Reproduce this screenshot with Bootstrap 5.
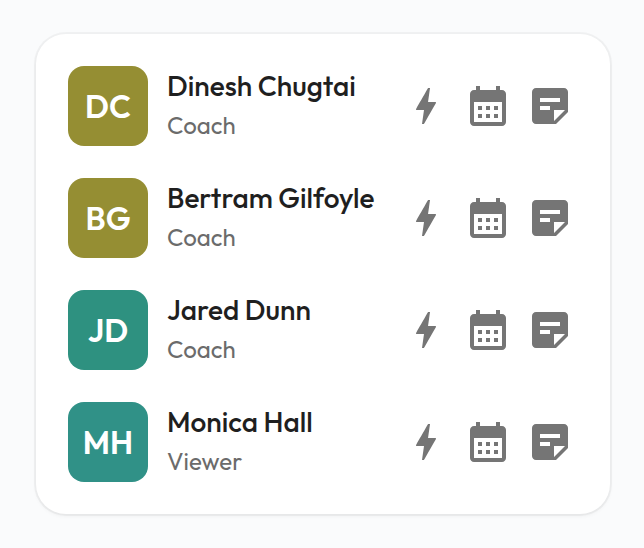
<!DOCTYPE html>
<html lang="en">
<head>
<meta charset="utf-8">
<meta name="viewport" content="width=device-width, initial-scale=1">
<title>Team members</title>
<link href="https://cdn.jsdelivr.net/npm/bootstrap@5.3.0/dist/css/bootstrap.min.css" rel="stylesheet">
<style>
body { background: #fafbfc; font-family: Outfit, Lato, sans-serif; }
.page-wrap { padding: 34px 34px 34px 36px; }
.team-card { border-radius: 30px; padding: 32px; box-shadow: 0 2px 4px rgba(0,0,0,.05), 0 0 0 2px rgba(0,0,0,.04); }
.member-list { gap: 32px; }
.avatar { width: 80px; height: 80px; border-radius: 16px; font-size: 32px; line-height: 40px; font-weight: 600; }
.avatar-olive { background: #958e33; }
.avatar-teal { background: #2e9180; }
.avatar-sea { background: #309187; }
.member-text { padding-left: 19px; }
.member-name { font-size: 28px; line-height: 40px; font-weight: 500; color: #1f1f1f; }
.member-role { font-size: 24px; line-height: 38px; color: #6b6b6b; }
.actions { gap: 14px; margin-right: 4px; }
.action { width: 48px; height: 48px; color: #757575; }
.action svg { width: 48px; height: 48px; fill: currentColor; }
</style>
</head>
<body>
<svg class="d-none" aria-hidden="true">
  <symbol id="bolt" viewBox="0 0 24 24"><path d="M11 21h-1l1-7H7.5c-.88 0-.33-.75-.31-.78C8.48 10.94 10.42 7.54 13.01 3h1l-1 7h3.51c.4 0 .62.19.4.66C12.97 17.55 11 21 11 21z"/></symbol>
  <symbol id="calendar" viewBox="0 0 24 24"><path fill-rule="evenodd" d="M19 4h-1V2h-2v2H8V2H6v2H5c-1.1 0-2 .9-2 2v14c0 1.100.9 2 2 2h14c1.100 0 2-.9 2-2V6c0-1.100-.9-2-2-2zM5 10h14v10H5zM7 12h2v2H7zM11 12h2v2h-2zM15 12h2v2h-2zM7 16h2v2H7zM11 16h2v2h-2zM15 16h2v2h-2z"/></symbol>
  <symbol id="note" viewBox="0 0 24 24"><path fill-rule="evenodd" d="M19 3H5c-1.100 0-2 .9-2 2v14c0 1.100.9 2 2 2h10l6-6V5c0-1.100-.9-2-2-2zM7 8h10v2H7zM7 12h5v2H7zM14 19.500V14h5.500z"/></symbol>
</svg>
<main class="page-wrap">
  <section class="team-card bg-white" aria-label="Team members">
    <ul class="member-list list-unstyled d-flex flex-column mb-0">
      <li class="d-flex">
        <div class="avatar avatar-olive d-flex align-items-center justify-content-center flex-shrink-0 text-white">DC</div>
        <div class="member-text flex-grow-1 text-nowrap"><div class="member-name">Dinesh Chugtai</div><div class="member-role">Coach</div></div>
        <div class="actions d-flex flex-shrink-0 align-self-center">
          <button type="button" class="action btn border-0 p-0" aria-label="Activity"><svg class="d-block"><use href="#bolt"/></svg></button>
          <button type="button" class="action btn border-0 p-0" aria-label="Calendar"><svg class="d-block"><use href="#calendar"/></svg></button>
          <button type="button" class="action btn border-0 p-0" aria-label="Notes"><svg class="d-block"><use href="#note"/></svg></button>
        </div>
      </li>
      <li class="d-flex">
        <div class="avatar avatar-olive d-flex align-items-center justify-content-center flex-shrink-0 text-white">BG</div>
        <div class="member-text flex-grow-1 text-nowrap"><div class="member-name">Bertram Gilfoyle</div><div class="member-role">Coach</div></div>
        <div class="actions d-flex flex-shrink-0 align-self-center">
          <button type="button" class="action btn border-0 p-0" aria-label="Activity"><svg class="d-block"><use href="#bolt"/></svg></button>
          <button type="button" class="action btn border-0 p-0" aria-label="Calendar"><svg class="d-block"><use href="#calendar"/></svg></button>
          <button type="button" class="action btn border-0 p-0" aria-label="Notes"><svg class="d-block"><use href="#note"/></svg></button>
        </div>
      </li>
      <li class="d-flex">
        <div class="avatar avatar-teal d-flex align-items-center justify-content-center flex-shrink-0 text-white">JD</div>
        <div class="member-text flex-grow-1 text-nowrap"><div class="member-name">Jared Dunn</div><div class="member-role">Coach</div></div>
        <div class="actions d-flex flex-shrink-0 align-self-center">
          <button type="button" class="action btn border-0 p-0" aria-label="Activity"><svg class="d-block"><use href="#bolt"/></svg></button>
          <button type="button" class="action btn border-0 p-0" aria-label="Calendar"><svg class="d-block"><use href="#calendar"/></svg></button>
          <button type="button" class="action btn border-0 p-0" aria-label="Notes"><svg class="d-block"><use href="#note"/></svg></button>
        </div>
      </li>
      <li class="d-flex">
        <div class="avatar avatar-sea d-flex align-items-center justify-content-center flex-shrink-0 text-white">MH</div>
        <div class="member-text flex-grow-1 text-nowrap"><div class="member-name">Monica Hall</div><div class="member-role">Viewer</div></div>
        <div class="actions d-flex flex-shrink-0 align-self-center">
          <button type="button" class="action btn border-0 p-0" aria-label="Activity"><svg class="d-block"><use href="#bolt"/></svg></button>
          <button type="button" class="action btn border-0 p-0" aria-label="Calendar"><svg class="d-block"><use href="#calendar"/></svg></button>
          <button type="button" class="action btn border-0 p-0" aria-label="Notes"><svg class="d-block"><use href="#note"/></svg></button>
        </div>
      </li>
    </ul>
  </section>
</main>
<script src="https://cdn.jsdelivr.net/npm/bootstrap@5.3.0/dist/js/bootstrap.bundle.min.js"></script>
</body>
</html>
